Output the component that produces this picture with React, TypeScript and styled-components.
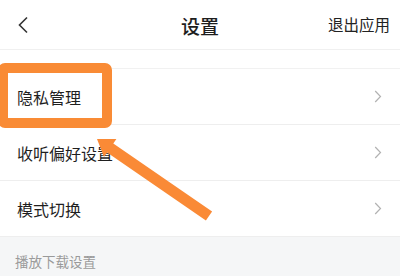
import React from 'react';
import styled, { createGlobalStyle } from 'styled-components';

const GlobalStyle = createGlobalStyle`
  html, body {
    margin: 0;
    padding: 0;
    background: #ffffff;
  }
  body {
    font-family: "Noto Sans CJK SC", "Noto Sans", sans-serif;
    color: #222222;
  }
`;

const Page = styled.div`
  position: relative;
  width: 400px;
  height: 276px;
  overflow: hidden;
  background: #ffffff;
`;

const Header = styled.header`
  height: 50px;
  display: grid;
  grid-template-columns: 1fr auto 1fr;
  align-items: center;
  border-bottom: 1px solid #f0f0f0;
  box-sizing: border-box;
`;

const BackButton = styled.div`
  padding-left: 17px;
  display: flex;
  align-items: center;
`;

const Title = styled.h1`
  margin: 0;
  font-size: 19px;
  font-weight: 500;
  color: #1e1e1e;
  line-height: 1;
  padding-top: 1px;
`;

const HeaderAction = styled.div`
  justify-self: end;
  padding-right: 10px;
  font-size: 15.5px;
  color: #222222;
  line-height: 1;
`;

const Spacer = styled.div`
  height: 18px;
  border-bottom: 1px solid #f1f1f1;
`;

const List = styled.ul`
  margin: 0;
  padding: 0;
  list-style: none;
`;

const Row = styled.li`
  height: 56px;
  box-sizing: border-box;
  display: flex;
  align-items: center;
  justify-content: space-between;
  padding: 0 18px 0 17px;
  border-bottom: 1px solid #eeeeee;
  font-size: 16px;
  color: #1f1f1f;
`;

const Section = styled.div`
  background: #f5f6f7;
  height: 48px;
  box-sizing: border-box;
  display: flex;
  align-items: center;
  padding: 0 15px 0;
  font-size: 13.5px;
  color: #9a9a9a;
`;

const Highlight = styled.div`
  position: absolute;
  left: -2px;
  top: 63px;
  width: 114px;
  height: 65px;
  box-sizing: border-box;
  border: 10px solid #f98b35;
  border-radius: 7px;
`;

const Overlay = styled.svg`
  position: absolute;
  left: 0;
  top: 0;
  pointer-events: none;
`;

const Chevron = () => (
  <svg width="8" height="13" viewBox="0 0 8 13">
    <path d="M1.2 1 L6.5 6.5 L1.2 12" fill="none" stroke="#b2b2b2" strokeWidth="1.2" />
  </svg>
);

const items = ['隐私管理', '收听偏好设置', '模式切换'];

const App: React.FC = () => (
  <Page>
    <GlobalStyle />
    <Header>
      <BackButton>
        <svg width="12" height="18" viewBox="0 0 12 18">
          <path d="M10 1.5 L2.5 9 L10 16.5" fill="none" stroke="#333333" strokeWidth="1.6" />
        </svg>
      </BackButton>
      <Title>设置</Title>
      <HeaderAction>退出应用</HeaderAction>
    </Header>
    <Spacer />
    <List>
      {items.map((label) => (
        <Row key={label}>
          <span>{label}</span>
          <Chevron />
        </Row>
      ))}
    </List>
    <Section>播放下载设置</Section>
    <Highlight />
    <Overlay width="400" height="276" viewBox="0 0 400 276">
      <polygon
        points="212.1,211.5 113.3,143.5 116.4,138.9 97,139 104,157.1 107.1,152.5 205.9,220.5"
        fill="#fa8a36"
      />
    </Overlay>
  </Page>
);

export default App;
